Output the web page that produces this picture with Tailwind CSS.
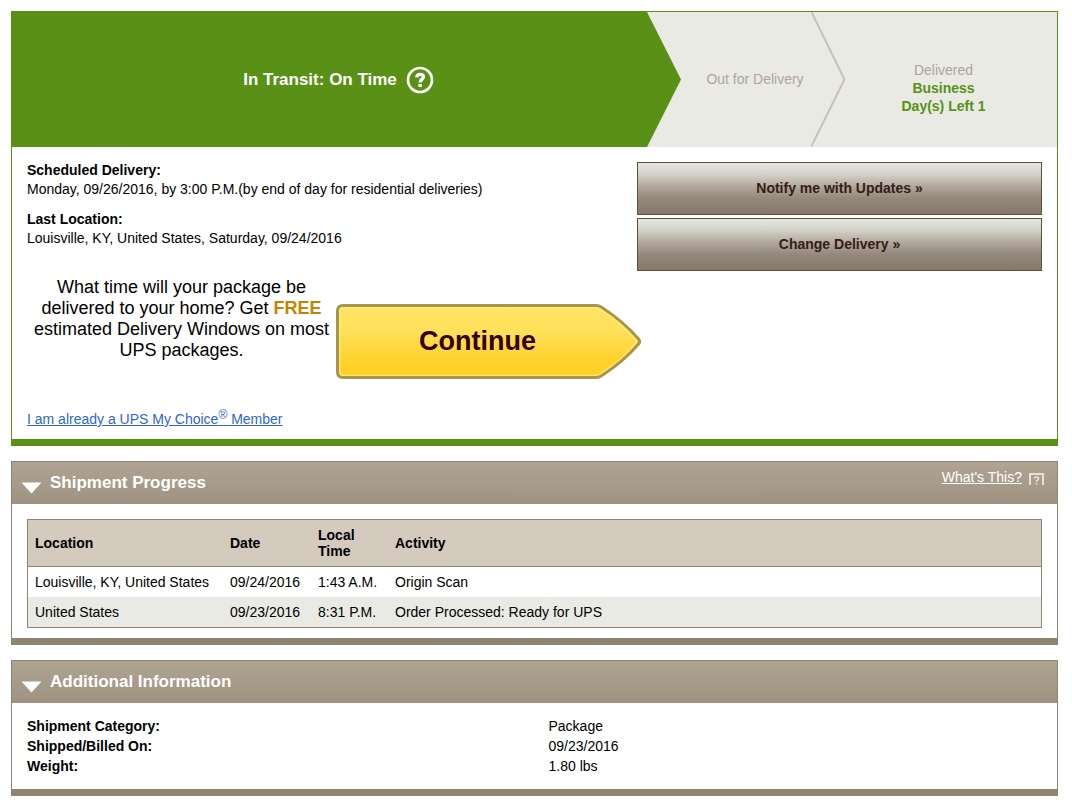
<!DOCTYPE html>
<html lang="en">
<head>
  <meta charset="UTF-8" />
  <meta name="viewport" content="width=device-width, initial-scale=1.0"/>
  <title>Tracking Detail</title>
  <script src="https://cdn.jsdelivr.net/npm/@tailwindcss/browser@4"></script>
</head>

<body class="bg-white text-black pt-[11px] pl-[11px] pr-[14px] pb-[6px] font-['Liberation_Sans',Arial,sans-serif] text-[14px] leading-[20px]">

  <main class="flex flex-col gap-[15px]">

    <!-- Delivery status -->
    <section class="border border-b-[7px] border-[#589116]">
      <div class="grid grid-cols-[669fr_165fr_211fr] h-[135px] bg-[#e9eae3] text-center">
        <div class="flex items-center justify-center gap-[9px] pr-4 bg-[#589116] text-white [clip-path:polygon(0_0,calc(100%_-_34px)_0,100%_50%,calc(100%_-_34px)_100%,0_100%)]">
          <h1 class="text-[17px] font-bold">In Transit: On Time</h1>
          <button type="button" aria-label="Help">
            <svg class="block w-[28px] h-[28px]" viewBox="0 0 28 28" fill="none">
              <circle cx="14" cy="14" r="12" stroke="#fff" stroke-width="2.6"/>
              <path d="M10.8 11.400C10.900 9.100 12.200 8.400 14.100 8.400c2 0 3.300 1 3.300 2.700 0 2.300-3.300 2.400-3.300 5.300" stroke="#fff" stroke-width="3.400"/>
              <path d="M12.400 17.900h3.400v3.100h-3.400z" fill="#fff"/>
            </svg>
          </button>
        </div>
        <div class="flex items-stretch text-[#b0a497]">
          <p class="flex-1 self-center pl-[18px] pb-[2px]">Out for Delivery</p>
          <svg class="w-[35px] h-[135px] shrink-0" viewBox="0 0 35 135" fill="none">
            <path d="M0.500 0L33.500 67.500L0 135" stroke="#c8c0b5" stroke-width="2"/>
          </svg>
        </div>
        <div class="flex flex-col justify-center pr-4 pt-[16px] leading-[18px]">
          <p class="text-[#b0a497]">Delivered</p>
          <p class="font-bold text-[#589116]">Business<br>Day(s) Left 1</p>
        </div>
      </div>

      <div class="grid grid-cols-[610px_1fr] px-[15px] pt-[14px] pb-[9px]">
        <div>
          <dl class="leading-[19px]">
            <dt class="font-bold">Scheduled Delivery:</dt>
            <dd class="mb-[11px]">Monday, 09/26/2016, by 3:00 P.M.(by end of day for residential deliveries)</dd>
            <dt class="font-bold">Last Location:</dt>
            <dd>Louisville, KY, United States, Saturday, 09/24/2016</dd>
          </dl>
          <div class="flex items-start pt-[29px]">
            <p class="w-[309px] shrink-0 text-center text-[18px] leading-[21px]">What time will your package be<br>delivered to your home? Get <strong class="text-[#c98200]">FREE</strong><br>estimated Delivery Windows on most<br>UPS packages.</p>
            <button type="button" class="grid place-items-center w-[305px] h-[76px] mt-[27px] shrink-0 text-[27px] font-bold text-[#330000]">
              <svg class="col-start-1 row-start-1 w-[305px] h-[76px]" viewBox="0 0 305 76">
                <defs>
                  <linearGradient id="gold" x1="0" y1="0" x2="0" y2="1">
                    <stop offset="0" stop-color="#ffe564"/>
                    <stop offset="0.350" stop-color="#ffe05a"/>
                    <stop offset="0.800" stop-color="#ffd129"/>
                    <stop offset="1" stop-color="#ffcf24"/>
                  </linearGradient>
                </defs>
                <path d="M7 1.500H260Q263 1.500 265.500 3.200Q288 18 302.500 35Q304.500 37.500 302.500 40Q288 57 265.500 71.800Q263 73.500 260 73.500H7Q1.500 73.500 1.500 68V7Q1.500 1.500 7 1.500Z" fill="url(#gold)" stroke="#a8954a" stroke-width="3"/>
                <path d="M7 3.800H260Q262.500 3.800 264.500 5.200Q286 19 300 36Q301 37.500 300 39Q286 56 264.500 69.800Q262.500 71.200 260 71.200H7Q3.800 71.200 3.800 68V7Q3.800 3.800 7 3.800Z" fill="none" stroke="#fff08c" stroke-opacity="0.6" stroke-width="1.500"/>
              </svg>
              <span class="col-start-1 row-start-1 pr-[22px] pb-[2px]">Continue</span>
            </button>
          </div>
          <p class="mt-[28px] leading-[22px]"><a href="#" class="text-[#3366cc] underline">I am already a UPS My Choice<sup class="text-[12px] -top-[5px]">®</sup> Member</a></p>
        </div>

        <div class="flex flex-col gap-[3px] pt-[1px]">
          <button type="button" class="h-[53px] pb-[2px] border border-[#5f5039] bg-[linear-gradient(#e6e7e1,#d3d1c8_22%,#aba195_50%,#92867a_72%,#88796a)] font-bold text-[#351c15]">Notify me with Updates »</button>
          <button type="button" class="h-[53px] pb-[2px] border border-[#5f5039] bg-[linear-gradient(#e6e7e1,#d3d1c8_22%,#aba195_50%,#92867a_72%,#88796a)] font-bold text-[#351c15]">Change Delivery »</button>
        </div>
      </div>
    </section>

    <!-- Shipment progress -->
    <section class="border border-b-[7px] border-[#8f8371]">
      <header class="flex items-start justify-between h-[42px] bg-linear-to-b from-[#afa491] to-[#9f9281] text-white">
        <h2 class="text-[17px] font-bold">
          <button type="button" class="flex items-center gap-[8px] h-[42px] pl-[9px]">
            <svg class="w-[21px] h-[12px] mt-[9px]" viewBox="0 0 21 12"><path d="M0.500 0.500H20.500L10.500 11.500Z" fill="#fff"/></svg>
            Shipment Progress
          </button>
        </h2>
        <a href="#" class="flex items-center gap-[7px] pr-[13px] pt-[5px]">
          <span class="underline">What's This?</span>
          <svg class="w-[15px] h-[12px] mt-[4px]" viewBox="0 0 15 12" fill="none">
            <path d="M1 12V1H14V12" stroke="#e5e1da" stroke-width="2"/>
            <path d="M5.300 5.500Q5.500 4 7.500 4Q9.600 4 9.600 5.500Q9.600 6.700 7.500 8V9M7.500 10V11.500" stroke="#e5e1da" stroke-width="1.600"/>
          </svg>
        </a>
      </header>
      <div class="px-[15px] pt-[15px] pb-[10px]">
        <table class="w-full border-separate border-spacing-0 border border-[#8f8371] text-left">
          <thead class="bg-[#d4cbbe] leading-[16px]">
            <tr class="h-[47px]">
              <th class="w-[195px] pl-[7px] border-b border-[#8f8371]">Location</th>
              <th class="w-[88px] pl-[7px] border-b border-[#8f8371]">Date</th>
              <th class="w-[77px] pl-[7px] border-b border-[#8f8371]">Local<br>Time</th>
              <th class="pl-[7px] border-b border-[#8f8371]">Activity</th>
            </tr>
          </thead>
          <tbody>
            <tr class="h-[30px]">
              <td class="pl-[7px]">Louisville, KY, United States</td>
              <td class="pl-[7px]">09/24/2016</td>
              <td class="pl-[7px]">1:43 A.M.</td>
              <td class="pl-[7px]">Origin Scan</td>
            </tr>
            <tr class="h-[30px] bg-[#e9eae3]">
              <td class="pl-[7px]">United States</td>
              <td class="pl-[7px]">09/23/2016</td>
              <td class="pl-[7px]">8:31 P.M.</td>
              <td class="pl-[7px]">Order Processed: Ready for UPS</td>
            </tr>
          </tbody>
        </table>
      </div>
    </section>

    <!-- Additional information -->
    <section class="border border-b-[7px] border-[#8f8371]">
      <header class="h-[42px] bg-linear-to-b from-[#afa491] to-[#9f9281] text-white">
        <h2 class="text-[17px] font-bold">
          <button type="button" class="flex items-center gap-[8px] h-[42px] pl-[9px]">
            <svg class="w-[21px] h-[12px] mt-[9px]" viewBox="0 0 21 12"><path d="M0.500 0.500H20.500L10.500 11.500Z" fill="#fff"/></svg>
            Additional Information
          </button>
        </h2>
      </header>
      <dl class="grid grid-cols-2 px-[15px] pt-[13px] pb-[13px]">
        <dt class="font-bold">Shipment Category:</dt>
        <dd class="pl-[14px]">Package</dd>
        <dt class="font-bold">Shipped/Billed On:</dt>
        <dd class="pl-[14px]">09/23/2016</dd>
        <dt class="font-bold">Weight:</dt>
        <dd class="pl-[14px]">1.80 lbs</dd>
      </dl>
    </section>

  </main>
</body>
</html>
